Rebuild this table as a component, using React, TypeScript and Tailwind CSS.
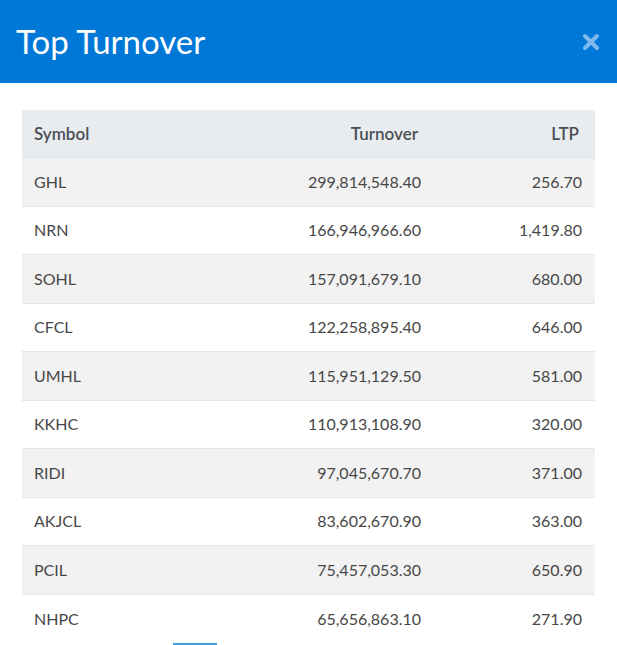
import React from "react";

const rows = [
  { symbol: "GHL", turnover: "299,814,548.40", ltp: "256.70" },
  { symbol: "NRN", turnover: "166,946,966.60", ltp: "1,419.80" },
  { symbol: "SOHL", turnover: "157,091,679.10", ltp: "680.00" },
  { symbol: "CFCL", turnover: "122,258,895.40", ltp: "646.00" },
  { symbol: "UMHL", turnover: "115,951,129.50", ltp: "581.00" },
  { symbol: "KKHC", turnover: "110,913,108.90", ltp: "320.00" },
  { symbol: "RIDI", turnover: "97,045,670.70", ltp: "371.00" },
  { symbol: "AKJCL", turnover: "83,602,670.90", ltp: "363.00" },
  { symbol: "PCIL", turnover: "75,457,053.30", ltp: "650.90" },
  { symbol: "NHPC", turnover: "65,656,863.10", ltp: "271.90" },
];

const App = () => {
  return (
    <div className="w-[617px] h-[645px] overflow-hidden bg-white font-['Lato','Open_Sans',sans-serif]">
      <div className="h-[83px] bg-[#0078d7] flex items-center justify-between pl-4 pr-[17px]">
        <h1 className="text-[33px] text-white leading-none -mt-[1px]">Top Turnover</h1>
        <button className="text-[#7ebaec]" aria-label="Close">
          <svg width="18" height="18" viewBox="0 0 18 18">
            <path d="M3 3 L15 15 M15 3 L3 15" stroke="currentColor" strokeWidth="4" strokeLinecap="round" />
          </svg>
        </button>
      </div>

      <div className="px-[22px] pt-[27px]">
        <div className="grid grid-cols-[1fr_160px_162px] h-[48px] items-center bg-[#e9ecef] border-b border-[#dee2e6] text-[17px] font-semibold text-[#4a4f55]">
          <div className="pl-3">Symbol</div>
          <div className="text-right pr-[15px]">Turnover</div>
          <div className="text-right pr-4">LTP</div>
        </div>
        {rows.map((r, i) => (
          <div
            key={r.symbol}
            className={`grid grid-cols-[1fr_160px_162px] h-[48.5px] items-center text-[16px] text-[#474747] ${
              i % 2 === 0 ? "bg-[#f2f2f2]" : "bg-white"
            } ${i < rows.length - 1 ? "border-b border-[#e3e5e8]" : ""}`}
          >
            <div className="pl-3">{r.symbol}</div>
            <div className="text-right pr-3">{r.turnover}</div>
            <div className="text-right pr-[13px]">{r.ltp}</div>
          </div>
        ))}
        <div className="ml-[151px] w-[44px] h-[3px] bg-[#3d9be0]" />
      </div>
    </div>
  );
};

export default App;
